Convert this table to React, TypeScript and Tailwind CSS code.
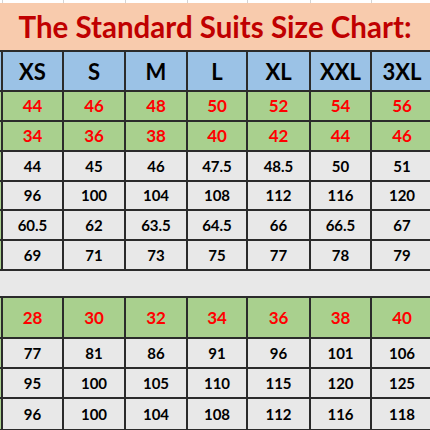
import React from 'react';

// Column template shared by every table row (stub column + 7 sizes)
const COLS = 'grid grid-cols-[3px_61px_62px_62px_60px_63px_61px_62px]';

const sizes = ['XS', 'S', 'M', 'L', 'XL', 'XXL', '3XL'];

const topRows = [
  ['44', '46', '48', '50', '52', '54', '56'],
  ['34', '36', '38', '40', '42', '44', '46'],
];

const upperBody = [
  { h: 'h-[30px]', v: ['44', '45', '46', '47.5', '48.5', '50', '51'] },
  { h: 'h-[29px]', v: ['96', '100', '104', '108', '112', '116', '120'] },
  { h: 'h-[30px]', v: ['60.5', '62', '63.5', '64.5', '66', '66.5', '67'] },
  { h: 'h-[30px]', v: ['69', '71', '73', '75', '77', '78', '79'] },
];

const pants = ['28', '30', '32', '34', '36', '38', '40'];

const lowerBody = [
  { h: 'h-[30px]', v: ['77', '81', '86', '91', '96', '101', '106'] },
  { h: 'h-[30px]', v: ['95', '100', '105', '110', '115', '120', '125'] },
  { h: 'h-[32px]', v: ['96', '100', '104', '108', '112', '116', '118'] },
];

const font = { fontFamily: 'Lato, "Open Sans", sans-serif' };

export default function App() {
  return (
    <div className="w-[430px] h-[430px] overflow-hidden bg-white" style={font}>
      {/* faint spreadsheet gridlines above the title */}
      <div className={`${COLS} h-[3px]`}>
        {[0, 1, 2, 3, 4, 5, 6, 7].map((i) => (
          <div key={i} className="border-r border-[#d4d4d4]" />
        ))}
      </div>

      {/* Title */}
      <div className="h-[49px] bg-[#f8cbad] border-b-2 border-[#2b2b2b] flex items-center justify-center">
        <h1 className="text-[29.5px] font-bold text-[#c00000] leading-none whitespace-nowrap pt-[1px]">
          The Standard Suits Size Chart:
        </h1>
      </div>

      {/* Size header */}
      <div className={`${COLS} h-[40px] bg-[#9bc2e6] border-b-2 border-[#2b2b2b]`}>
        <div className="border-r-2 border-[#2b2b2b]" />
        {sizes.map((s) => (
          <div
            key={s}
            className="border-r-2 border-[#2b2b2b] flex items-center justify-center text-[22px] font-bold text-black"
          >
            {s}
          </div>
        ))}
      </div>

      {/* Red number rows */}
      {topRows.map((row, r) => (
        <div key={r} className={`${COLS} h-[30px] bg-[#a9d08e] border-b-2 border-[#2b2b2b]`}>
          <div className="border-r-2 border-[#2b2b2b]" />
          {row.map((v, i) => (
            <div
              key={i}
              className="border-r-2 border-[#2b2b2b] flex items-center justify-center text-[17px] font-bold text-[#ff0000]"
            >
              {v}
            </div>
          ))}
        </div>
      ))}

      {/* Upper body measurements */}
      {upperBody.map((row, r) => (
        <div key={r} className={`${COLS} ${row.h} bg-[#e8e8e8] border-b-2 border-[#2b2b2b]`}>
          <div className="bg-[#a9d08e] border-r-2 border-[#2b2b2b]" />
          {row.v.map((v, i) => (
            <div
              key={i}
              className="border-r-2 border-[#2b2b2b] flex items-center justify-center text-[15px] font-bold text-black"
            >
              {v}
            </div>
          ))}
        </div>
      ))}

      {/* blank spacer row */}
      <div className="h-[27px] bg-[#e8e8e8] border-b-2 border-[#2b2b2b]" />

      {/* Pants sizes */}
      <div className={`${COLS} h-[41px] bg-[#a9d08e] border-b-2 border-[#2b2b2b]`}>
        <div className="border-r-2 border-[#2b2b2b]" />
        {pants.map((v, i) => (
          <div
            key={i}
            className="border-r-2 border-[#2b2b2b] flex items-center justify-center text-[17px] font-bold text-[#ff0000]"
          >
            {v}
          </div>
        ))}
      </div>

      {/* Lower body measurements */}
      {lowerBody.map((row, r) => (
        <div key={r} className={`${COLS} ${row.h} bg-[#e8e8e8] border-b-2 border-[#2b2b2b]`}>
          <div className="bg-[#a9d08e] border-r-2 border-[#2b2b2b]" />
          {row.v.map((v, i) => (
            <div
              key={i}
              className="border-r-2 border-[#2b2b2b] flex items-center justify-center text-[15px] font-bold text-black"
            >
              {v}
            </div>
          ))}
        </div>
      ))}
    </div>
  );
}
